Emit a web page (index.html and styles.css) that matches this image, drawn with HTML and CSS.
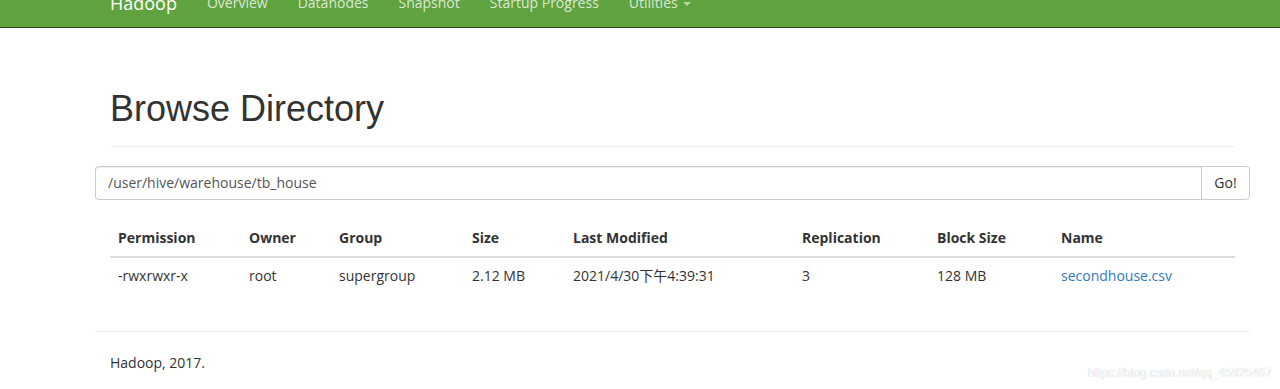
FILE: index.html
```html
<!DOCTYPE html>
<html lang="en">
<head>
    <meta charset="UTF-8">
    <meta name="viewport" content="width=device-width, initial-scale=1.0">
    <title>Browsing HDFS</title>
    <link rel="stylesheet" href="styles.css">
</head>
<body>
    <header class="navbar">
        <div class="navbar-inner">
            <a class="brand" href="#">Hadoop</a>
            <ul class="nav">
                <li><a href="#">Overview</a></li>
                <li><a href="#">Datanodes</a></li>
                <li><a href="#">Snapshot</a></li>
                <li><a href="#">Startup Progress</a></li>
                <li><a href="#">Utilities <span class="caret"></span></a></li>
            </ul>
        </div>
    </header>

    <div class="container">
        <div class="col">
            <div class="page-header">
                <h1>Browse Directory</h1>
            </div>
        </div>

        <form class="input-group" onsubmit="return false">
            <input type="text" class="path-input" value="/user/hive/warehouse/tb_house">
            <button type="submit" class="go-btn">Go!</button>
        </form>

        <div class="col">
            <table class="table">
                <thead>
                    <tr>
                        <th class="c-perm">Permission</th>
                        <th class="c-owner">Owner</th>
                        <th class="c-group">Group</th>
                        <th class="c-size">Size</th>
                        <th class="c-mod">Last Modified</th>
                        <th class="c-rep">Replication</th>
                        <th class="c-block">Block Size</th>
                        <th>Name</th>
                    </tr>
                </thead>
                <tbody>
                    <tr>
                        <td>-rwxrwxr-x</td>
                        <td>root</td>
                        <td>supergroup</td>
                        <td>2.12 MB</td>
                        <td>2021/4/30下午4:39:31</td>
                        <td>3</td>
                        <td>128 MB</td>
                        <td><a href="#">secondhouse.csv</a></td>
                    </tr>
                </tbody>
            </table>
        </div>

        <hr class="footer-rule">
        <div class="col">
            <p class="footer">Hadoop, 2017.</p>
        </div>
    </div>

    <div class="watermark">https://blog.csdn.net/qq_45925467</div>
</body>
</html>
```

FILE: styles.css
```css
body {
    margin: 0;
    font-family: "Open Sans", "Noto Sans CJK SC", sans-serif;
    font-size: 14px;
    line-height: 20px;
    color: #333;
    background-color: #fff;
    overflow: hidden;
}
a {
    color: #337ab7;
    text-decoration: none;
}
.navbar {
    margin-top: -22px;
    height: 49px;
    background-color: #5fa33e;
    border-bottom: 1px solid #2b4a1f;
}
.navbar-inner {
    display: flex;
    margin-left: 95px;
}
.brand {
    padding: 15px;
    font-size: 18px;
    line-height: 20px;
    color: #fff;
}
.nav {
    display: flex;
    list-style: none;
    margin: 0;
    padding: 0;
}
.nav a {
    display: block;
    padding: 15px;
    line-height: 20px;
    color: #dde6d6;
}
.caret {
    display: inline-block;
    width: 0;
    height: 0;
    margin-left: 2px;
    vertical-align: middle;
    border-top: 4px solid #b9d3ad;
    border-left: 4px solid transparent;
    border-right: 4px solid transparent;
}
.container {
    margin-left: 95px;
    width: 1155px;
}
.col {
    padding: 0 15px;
}
.page-header {
    margin-top: 61px;
    padding-bottom: 7px;
    border-bottom: 1px solid #eee;
}
.page-header h1 {
    margin: 0 0 10px;
    font-family: "Liberation Sans", Arial, sans-serif;
    font-size: 36px;
    font-weight: 500;
    line-height: 1.1;
}
.input-group {
    display: flex;
    margin-top: 19px;
    height: 34px;
}
.path-input {
    flex: 1;
    box-sizing: border-box;
    height: 34px;
    padding: 6px 12px;
    font-family: "Open Sans", sans-serif;
    font-size: 14px;
    color: #555;
    border: 1px solid #ccc;
    border-right: none;
    border-radius: 4px 0 0 4px;
    outline: none;
    box-shadow: inset 0 1px 1px rgba(0, 0, 0, 0.075);
}
.go-btn {
    box-sizing: border-box;
    width: 49px;
    height: 34px;
    padding: 6px 12px;
    font-family: "Open Sans", sans-serif;
    font-size: 14px;
    color: #333;
    background-color: #fff;
    border: 1px solid #ccc;
    border-radius: 0 4px 4px 0;
    cursor: pointer;
}
.table {
    width: 100%;
    margin: 20px 0 0;
    border-collapse: collapse;
    border-spacing: 0;
}
.table th,
.table td {
    padding: 8px;
    text-align: left;
    vertical-align: top;
    line-height: 20px;
}
.table th {
    font-weight: bold;
    border-bottom: 2px solid #ddd;
}
.c-perm { width: 115px; }
.c-owner { width: 74px; }
.c-group { width: 117px; }
.c-size { width: 85px; }
.c-mod { width: 213px; }
.c-rep { width: 119px; }
.c-block { width: 108px; }
.footer-rule {
    margin: 37px 0 0;
    border: 0;
    border-top: 1px solid #eee;
}
.footer {
    margin: 21px 0 0;
}
.watermark {
    position: absolute;
    right: 8px;
    bottom: 6px;
    font-family: "Liberation Sans", Arial, sans-serif;
    font-size: 12px;
    color: #fdfdfd;
    text-shadow: 0 0 1px #b8b8b8;
}
```
